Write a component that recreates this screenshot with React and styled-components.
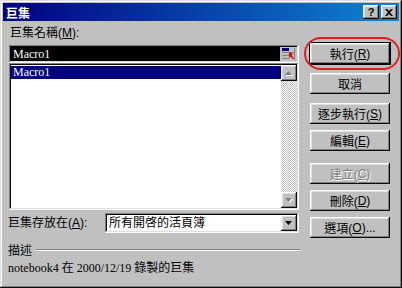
import React from "react";
import styled, { createGlobalStyle, css } from "styled-components";

const GlobalStyle = createGlobalStyle`
  body {
    margin: 0;
    background: #c0c0c0;
  }
`;

const cjk = `"Liberation Sans", "Noto Sans CJK TC", sans-serif`;
const serif = `"Liberation Serif", "Noto Sans CJK TC", serif`;

const raised = css`
  box-shadow: inset -1px -1px #0a0a0a, inset 1px 1px #ffffff,
    inset -2px -2px #808080, inset 2px 2px #dfdfdf;
`;

const sunken = css`
  box-shadow: inset -1px -1px #ffffff, inset 1px 1px #808080,
    inset -2px -2px #dfdfdf, inset 2px 2px #0a0a0a;
`;

const Window = styled.div`
  position: relative;
  width: 402px;
  height: 288px;
  box-sizing: border-box;
  padding: 3px;
  background: #c0c0c0;
  box-shadow: inset -1px -1px #0a0a0a, inset 1px 1px #dfdfdf,
    inset -2px -2px #808080, inset 2px 2px #ffffff;
  font-family: ${cjk};
  font-size: 12px;
  color: #000;
`;

const TitleBar = styled.div`
  height: 18px;
  display: flex;
  align-items: center;
  justify-content: space-between;
  padding: 0 2px 0 3px;
  background: linear-gradient(90deg, #000080, #1084d0);
  color: #fff;
  font-weight: bold;
  font-size: 12px;
`;

const TitleButtons = styled.div`
  display: flex;
  gap: 2px;
`;

const TitleButton = styled.div`
  width: 16px;
  height: 14px;
  box-sizing: border-box;
  background: #c0c0c0;
  ${raised};
  display: flex;
  align-items: center;
  justify-content: center;
  color: #000;
  font-family: "Liberation Sans", sans-serif;
  font-weight: bold;
  font-size: 11px;
  line-height: 1;
`;

const Client = styled.div`
  display: flex;
  padding-left: 6px;
  gap: 11px;
`;

const LeftColumn = styled.div`
  width: 290px;
  display: flex;
  flex-direction: column;
`;

const Label = styled.div`
  height: 14px;
  line-height: 14px;
  white-space: nowrap;
  margin: ${(p) => p.$margin || "0"};
`;

const NameField = styled.div`
  height: 18px;
  box-sizing: border-box;
  padding: 2px;
  background: #fff;
  ${sunken};
  display: flex;
`;

const NameText = styled.div`
  flex: 1;
  background: #000;
  color: #fff;
  font-family: ${serif};
  font-size: 12px;
  line-height: 14px;
  padding-left: 2px;
`;

const PickButton = styled.div`
  width: 17px;
  background: #c0c0c0;
  display: flex;
  align-items: center;
  justify-content: center;
`;

const List = styled.div`
  height: 147px;
  box-sizing: border-box;
  padding: 2px;
  background: #fff;
  ${sunken};
  display: flex;
`;

const ListItems = styled.div`
  flex: 1;
`;

const ListItem = styled.div`
  height: 13px;
  line-height: 13px;
  margin-top: 1px;
  padding-left: 2px;
  font-family: ${serif};
  font-size: 12px;
  background: ${(p) => (p.$selected ? "#000080" : "transparent")};
  color: ${(p) => (p.$selected ? "#fff" : "#000")};
`;

const ScrollBar = styled.div`
  width: 16px;
  display: flex;
  flex-direction: column;
`;

const ScrollTrack = styled.div`
  flex: 1;
  background: repeating-conic-gradient(#ffffff 0 25%, #c0c0c0 0 50%) 0 0 /
    2px 2px;
`;

const ArrowButton = styled.div`
  width: ${(p) => p.$width || 16}px;
  height: ${(p) => p.$height || 16}px;
  box-sizing: border-box;
  background: #c0c0c0;
  ${raised};
  display: flex;
  align-items: center;
  justify-content: center;
`;

const StoreRow = styled.div`
  display: flex;
  align-items: center;
  justify-content: space-between;
  margin-top: 3px;
  margin-left: -1px;
`;

const Combo = styled.div`
  width: 194px;
  height: 20px;
  box-sizing: border-box;
  padding: 2px;
  background: #fff;
  ${sunken};
  display: flex;
`;

const ComboText = styled.div`
  flex: 1;
  line-height: 16px;
  padding-left: 2px;
  white-space: nowrap;
`;

const GroupHeader = styled.div`
  display: flex;
  align-items: center;
  gap: 4px;
  margin: 8px 0 0 -1px;
  width: 292px;
`;

const Etched = styled.div`
  flex: 1;
  height: 1px;
  background: #808080;
  border-bottom: 1px solid #fff;
`;

const Description = styled.div`
  margin: 3px 0 0 -1px;
  font-family: ${serif};
  font-size: 12px;
  line-height: 14px;
  white-space: nowrap;
`;

const ButtonColumn = styled.div`
  display: flex;
  flex-direction: column;
  padding-top: 21px;
`;

const Button = styled.div`
  width: 80px;
  height: 21px;
  box-sizing: border-box;
  margin-top: ${(p) => p.$top || 0}px;
  background: #c0c0c0;
  display: flex;
  align-items: center;
  justify-content: center;
  white-space: nowrap;
  ${raised};
  ${(p) =>
    p.$default &&
    css`
      height: 23px;
      width: 82px;
      margin-left: -1px;
      border: 1px solid #000;
    `}
  ${(p) =>
    p.$disabled &&
    css`
      color: #808080;
      text-shadow: 1px 1px #fff;
    `}
`;

const Highlight = styled.div`
  position: absolute;
  left: 304px;
  top: 37px;
  width: 96px;
  height: 33px;
  box-sizing: border-box;
  border: 2px solid #e51c1c;
  border-radius: 17px / 16px;
  pointer-events: none;
`;

const Key = styled.span`
  text-decoration: underline;
`;

const UpArrow = ({ color = "#808080", shadow = true }) => (
  <svg width="8" height="5" viewBox="0 0 8 5">
    {shadow && <polygon points="4,1 8,5 1,5" fill="#fff" />}
    <polygon points="3.5,0 7,4 0,4" fill={color} />
  </svg>
);

const DownArrow = ({ color = "#808080", shadow = true }) => (
  <svg width="8" height="5" viewBox="0 0 8 5">
    {shadow && <polygon points="1,1 8,1 4.5,5" fill="#fff" />}
    <polygon points="0,0 7,0 3.5,4" fill={color} />
  </svg>
);

const PickIcon = () => (
  <svg width="14" height="12" viewBox="0 0 14 12">
    <rect x="0" y="0" width="7" height="3" fill="#000080" />
    <rect x="0" y="4" width="13" height="1" fill="#808080" />
    <rect x="0" y="7" width="8" height="1" fill="#808080" />
    <rect x="0" y="10" width="7" height="1" fill="#808080" />
    <rect x="12" y="0" width="1" height="12" fill="#808080" />
    <path d="M7 4 L7 10 L8.5 8.5 L11 11 L12 10 L9.5 7.5 L11 6 Z" fill="#e00000" />
  </svg>
);

const CloseGlyph = () => (
  <svg width="8" height="7" viewBox="0 0 8 7">
    <path d="M0 0 L2 0 L4 2 L6 0 L8 0 L5 3.5 L8 7 L6 7 L4 5 L2 7 L0 7 L3 3.5 Z" fill="#000" />
  </svg>
);

export default function App() {
  return (
    <>
      <GlobalStyle />
      <Window>
        <TitleBar>
          <span>巨集</span>
          <TitleButtons>
            <TitleButton>?</TitleButton>
            <TitleButton>
              <CloseGlyph />
            </TitleButton>
          </TitleButtons>
        </TitleBar>
        <Client>
          <LeftColumn>
            <Label $margin="5px 0 5px 1px">
              巨集名稱(<Key>M</Key>):
            </Label>
            <NameField>
              <NameText>Macro1</NameText>
              <PickButton>
                <PickIcon />
              </PickButton>
            </NameField>
            <List>
              <ListItems>
                <ListItem $selected>Macro1</ListItem>
              </ListItems>
              <ScrollBar>
                <ArrowButton>
                  <UpArrow />
                </ArrowButton>
                <ScrollTrack />
                <ArrowButton>
                  <DownArrow />
                </ArrowButton>
              </ScrollBar>
            </List>
            <StoreRow>
              <Label>
                巨集存放在(<Key>A</Key>):
              </Label>
              <Combo>
                <ComboText>所有開啓的活頁簿</ComboText>
                <ArrowButton $height={16}>
                  <DownArrow color="#000" shadow={false} />
                </ArrowButton>
              </Combo>
            </StoreRow>
            <GroupHeader>
              <span>描述</span>
              <Etched />
            </GroupHeader>
            <Description>notebook4 在 2000/12/19 錄製的巨集</Description>
          </LeftColumn>
          <ButtonColumn>
            <Button $default>
              執行(<Key>R</Key>)
            </Button>
            <Button $top={8}>取消</Button>
            <Button $top={9}>
              逐步執行(<Key>S</Key>)
            </Button>
            <Button $top={6}>
              編輯(<Key>E</Key>)
            </Button>
            <Button $top={12} $disabled>
              建立(<Key>C</Key>)
            </Button>
            <Button $top={6}>
              刪除(<Key>D</Key>)
            </Button>
            <Button $top={6}>
              選項(<Key>O</Key>)...
            </Button>
          </ButtonColumn>
        </Client>
        <Highlight />
      </Window>
    </>
  );
}
